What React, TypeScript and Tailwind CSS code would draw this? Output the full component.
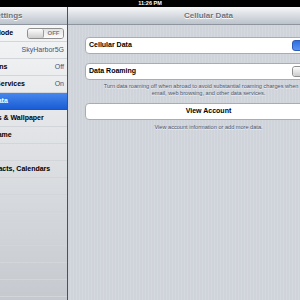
import React from "react"

type Row = { label: string; value?: string; toggle?: boolean; selected?: boolean }

const rows: Row[] = [
  { label: "Airplane Mode", toggle: true },
  { label: "Wi-Fi", value: "SkyHarbor5G" },
  { label: "Notifications", value: "Off" },
  { label: "Location Services", value: "On" },
  { label: "Cellular Data", selected: true },
  { label: "Brightness & Wallpaper" },
  { label: "Picture Frame" },
  { label: "General" },
  { label: "Mail, Contacts, Calendars" },
  { label: "Safari" },
  { label: "iPod" },
  { label: "Video" },
  { label: "Photos" },
  { label: "Notes" },
  { label: "Store" },
  { label: "" },
  { label: "" },
]

function OffToggle() {
  return (
    <div className="w-[37px] h-[11px] rounded-[3px] border border-[#8f8f8f] flex overflow-hidden shrink-0">
      <div className="w-[16px] bg-gradient-to-b from-[#fdfdfd] to-[#cdcdcd] border-r border-[#9c9c9c] rounded-[2px]" />
      <div className="flex-1 bg-gradient-to-b from-[#e4e4e4] to-[#fbfbfb] text-[#7b7b7b] text-[6px] font-bold flex items-center justify-center leading-none">
        OFF
      </div>
    </div>
  )
}

export default function App() {
  return (
    <div className="w-[300px] h-[300px] overflow-hidden flex flex-col bg-black font-['Liberation_Sans',Arial,sans-serif]">

      {/* STATUS BAR */}
      <div className="h-[7px] shrink-0 bg-black flex items-center justify-center text-white text-[5.5px] font-bold leading-none">
        11:26 PM
      </div>

      <div className="flex flex-1 min-h-0">

        {/* SIDEBAR */}
        <div className="w-[68px] shrink-0 overflow-hidden flex flex-col border-r border-[#4d5158]">
          <div className="h-[18px] shrink-0 bg-gradient-to-b from-[#f6f7f8] to-[#bcc3cc] border-b border-[#8e959e] flex items-center">
            <span className="-ml-[9px] text-[8px] font-bold text-[#6b7380] whitespace-nowrap [text-shadow:0_1px_0_#fff]">
              Settings
            </span>
          </div>
          <div className="flex-1 bg-gradient-to-b from-[#f4f5f6] to-[#c3c7cd]">
            <div className="-ml-[35px] w-[102px]">
              {rows.map((r, i) => (
                <div
                  key={i}
                  className={
                    "h-[17px] border-b flex items-center justify-between pr-[3px] text-[7px] font-bold whitespace-nowrap " +
                    (r.selected
                      ? "bg-gradient-to-b from-[#4687ee] to-[#1a5cd4] text-white border-[#1a55c0]"
                      : "text-black border-[#d2d5d9]")
                  }
                >
                  <span>{r.label}</span>
                  {r.toggle && <OffToggle />}
                  {r.value && <span className="font-normal text-[#385487]">{r.value}</span>}
                </div>
              ))}
            </div>
          </div>
        </div>

        {/* DETAIL */}
        <div className="w-[281px] shrink-0 flex flex-col">
          <div className="h-[18px] shrink-0 bg-gradient-to-b from-[#f6f7f8] to-[#bcc3cc] border-b border-[#8e959e] flex items-center justify-center">
            <span className="text-[8px] font-bold text-[#6b7380] [text-shadow:0_1px_0_#fff]">Cellular Data</span>
          </div>
          <div className="flex-1 px-[17px] pt-[12px] bg-[repeating-linear-gradient(90deg,#cfd3da_0px,#cfd3da_2px,#d5d8de_2px,#d5d8de_3px)]">

            <div className="h-[17px] bg-white border border-[#a9adb3] rounded-[4px] flex items-center justify-between pl-[3px] pr-[2px]">
              <span className="text-[7px] font-bold text-black">Cellular Data</span>
              <div className="w-[37px] h-[11px] rounded-[3px] border border-[#2d5bb8] bg-gradient-to-b from-[#2f6ee0] to-[#5a94f0] flex items-center overflow-hidden">
                <span className="w-[21px] pl-[6px] text-center text-white text-[6px] font-bold leading-none">ON</span>
                <div className="flex-1 h-full bg-gradient-to-b from-[#fdfdfd] to-[#cdcdcd] rounded-[2px]" />
              </div>
            </div>

            <div className="mt-[9px] h-[17px] bg-white border border-[#a9adb3] rounded-[4px] flex items-center justify-between pl-[3px] pr-[2px]">
              <span className="text-[7px] font-bold text-black">Data Roaming</span>
              <OffToggle />
            </div>

            <p className="mt-[2.5px] text-center text-[5.6px] leading-[7px] text-[#4c566c] whitespace-nowrap [text-shadow:0_1px_0_#eef0f3]">
              Turn data roaming off when abroad to avoid substantial roaming charges when using
              <br />
              email, web browsing, and other data services.
            </p>

            <div className="mt-[6.5px] h-[17px] bg-white border border-[#a9adb3] rounded-[4px] flex items-center justify-center">
              <span className="text-[7px] font-bold text-black">View Account</span>
            </div>

            <p className="mt-[3.5px] text-center text-[5.6px] leading-[7px] text-[#4c566c] [text-shadow:0_1px_0_#eef0f3]">
              View account information or add more data.
            </p>
          </div>
        </div>

      </div>
    </div>
  )
}
